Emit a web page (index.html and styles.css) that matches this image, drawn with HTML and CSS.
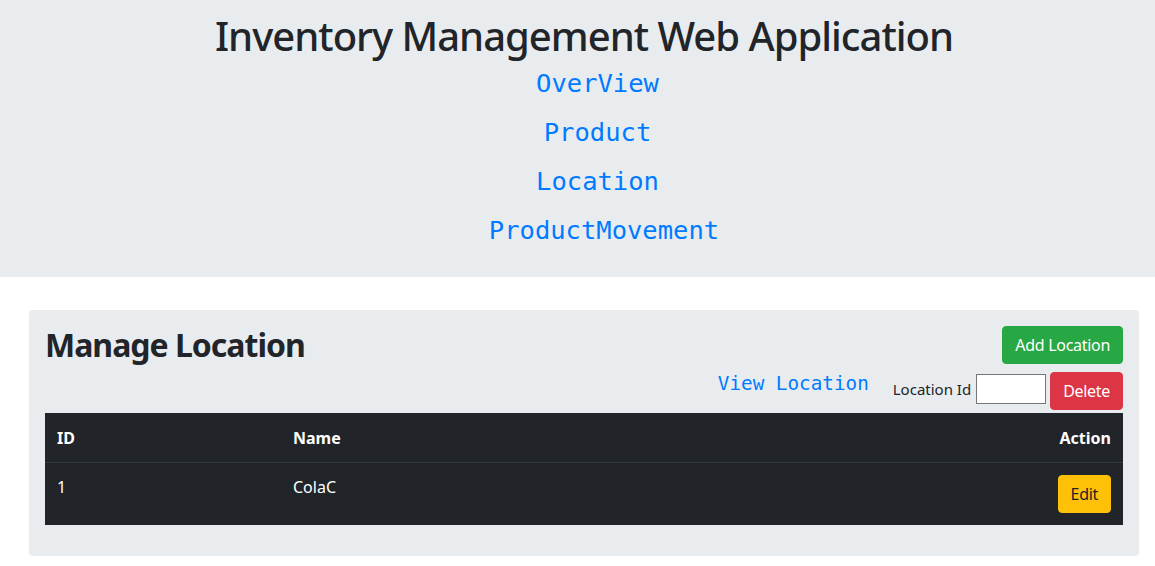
FILE: index.html
```html
<!DOCTYPE html>
<html lang="en">
<head>
<meta charset="utf-8">
<title>Inventory Management Web Application</title>
<link rel="stylesheet" href="styles.css">
</head>
<body>
<header class="hero">
  <h1 class="hero-title">Inventory Management Web Application</h1>
  <ul class="hero-nav">
    <li><a href="#">OverView</a></li>
    <li><a href="#">Product</a></li>
    <li><a href="#">Location</a></li>
    <li class="nav-shift"><a href="#">ProductMovement</a></li>
  </ul>
</header>
<main class="container">
  <section class="panel">
    <div class="panel-top">
      <h2 class="panel-title">Manage Location</h2>
      <button class="btn btn-green">Add Location</button>
    </div>
    <div class="panel-tools">
      <a class="view-link" href="#">View Location</a>
      <form class="del-form">
        <label class="del-label" for="locid">Location Id</label>
        <input id="locid" class="del-input" type="text">
        <button type="button" class="btn btn-red">Delete</button>
      </form>
    </div>
    <table class="grid">
      <thead>
        <tr><th class="col-id">ID</th><th class="col-name">Name</th><th class="col-act">Action</th></tr>
      </thead>
      <tbody>
        <tr><td class="col-id">1</td><td class="col-name">ColaC</td><td class="col-act"><button class="btn btn-yellow">Edit</button></td></tr>
      </tbody>
    </table>
  </section>
</main>
</body>
</html>
```

FILE: styles.css
```css
* { box-sizing: border-box; }
body {
  margin: 0;
  font-family: "Noto Sans", "Open Sans", sans-serif;
  font-size: 16px;
  line-height: 1.5;
  color: #212529;
  background: #fff;
}
.hero {
  background: #e9ecef;
  height: 277px;
  padding-top: 12px;
  text-align: center;
}
.hero-title {
  margin: 0;
  padding-left: 13px;
  font-size: 40px;
  font-weight: 500;
  line-height: 48px;
  letter-spacing: -1px;
}
.hero-nav {
  list-style: none;
  margin: -1px 0 0;
  padding-left: 40px;
}
.hero-nav li {
  height: 49px;
  line-height: 49px;
}
.hero-nav .nav-shift { padding-left: 13px; }
.hero-nav a {
  font-family: "DejaVu Sans Mono", "Liberation Mono", monospace;
  font-size: 25.5px;
  color: #007bff;
  text-decoration: none;
}
.container {
  width: 1110px;
  margin: 33px 0 0 29px;
}
.panel {
  background: #e9ecef;
  border-radius: 4px;
  padding: 16px;
}
.panel-top {
  display: flex;
  justify-content: space-between;
  align-items: center;
}
.panel-title {
  margin: 0;
  font-size: 32px;
  font-weight: 700;
  line-height: 38px;
  letter-spacing: -1px;
}
.panel-tools {
  display: flex;
  justify-content: flex-end;
  align-items: center;
  margin-top: 8px;
  margin-bottom: 3px;
}
.view-link {
  font-family: "DejaVu Sans Mono", "Liberation Mono", monospace;
  font-size: 19.3px;
  color: #007bff;
  text-decoration: none;
  margin-right: 24px;
  margin-top: -13px;
}
.del-form {
  display: flex;
  align-items: center;
  gap: 4px;
}
.del-label {
  font-size: 15px;
  margin-right: 1px;
  margin-top: -3px;
}
.del-input {
  width: 70px;
  height: 30px;
  border: 1px solid #767676;
  background: #fff;
  margin-top: -4px;
}
.btn {
  font-family: inherit;
  font-size: 16px;
  line-height: 24px;
  padding: 6px 12px;
  border: 1px solid transparent;
  border-radius: 4px;
  letter-spacing: -0.3px;
  cursor: pointer;
}
.btn-green { background: #28a745; border-color: #28a745; color: #fff; }
.btn-red { background: #dc3545; border-color: #dc3545; color: #fff; }
.btn-yellow { background: #ffc107; border-color: #ffc107; color: #212529; }
.grid {
  width: 100%;
  border-collapse: collapse;
  background: #212529;
  color: #fff;
  margin-bottom: 15px;
}
.grid th, .grid td {
  padding: 12px;
  vertical-align: top;
  text-align: left;
}
.grid th {
  font-weight: 700;
  border-top: 1px solid #212529;
  border-bottom: 1px solid #32383e;
}
.grid td { border-top: 1px solid #32383e; }
.grid .col-id { width: 236px; }
.grid .col-act { text-align: right; }
```
